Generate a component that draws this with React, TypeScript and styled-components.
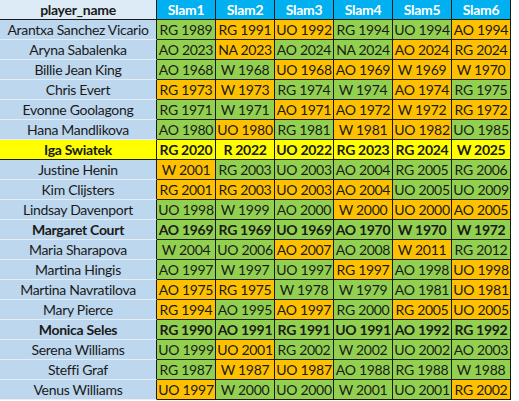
import React from 'react'
import styled, { createGlobalStyle } from 'styled-components'

const GlobalStyle = createGlobalStyle`
  html, body {
    margin: 0;
    padding: 0;
    background: #ffffff;
  }
`

type Tone = 'g' | 'o' | 'y'

interface Player {
  name: string
  bold?: boolean
  highlight?: boolean
  slams: [string, Tone][]
}

const players: Player[] = [
  { name: 'Arantxa Sanchez Vicario', slams: [['RG 1989', 'g'], ['RG 1991', 'o'], ['UO 1992', 'o'], ['RG 1994', 'g'], ['UO 1994', 'g'], ['AO 1994', 'o']] },
  { name: 'Aryna Sabalenka', slams: [['AO 2023', 'g'], ['NA 2023', 'o'], ['AO 2024', 'g'], ['NA 2024', 'g'], ['AO 2024', 'o'], ['RG 2024', 'o']] },
  { name: 'Billie Jean King', slams: [['AO 1968', 'g'], ['W 1968', 'g'], ['UO 1968', 'o'], ['AO 1969', 'o'], ['W 1969', 'o'], ['W 1970', 'o']] },
  { name: 'Chris Evert', slams: [['RG 1973', 'o'], ['W 1973', 'o'], ['RG 1974', 'g'], ['W 1974', 'g'], ['AO 1974', 'o'], ['RG 1975', 'g']] },
  { name: 'Evonne Goolagong', slams: [['RG 1971', 'g'], ['W 1971', 'g'], ['AO 1971', 'o'], ['AO 1972', 'o'], ['W 1972', 'o'], ['RG 1972', 'o']] },
  { name: 'Hana Mandlikova', slams: [['AO 1980', 'g'], ['UO 1980', 'o'], ['RG 1981', 'g'], ['W 1981', 'o'], ['UO 1982', 'o'], ['UO 1985', 'g']] },
  { name: 'Iga Swiatek', bold: true, highlight: true, slams: [['RG 2020', 'y'], ['R 2022', 'y'], ['UO 2022', 'y'], ['RG 2023', 'y'], ['RG 2024', 'y'], ['W 2025', 'y']] },
  { name: 'Justine Henin', slams: [['W 2001', 'o'], ['RG 2003', 'g'], ['UO 2003', 'g'], ['AO 2004', 'g'], ['RG 2005', 'g'], ['RG 2006', 'g']] },
  { name: 'Kim Clijsters', slams: [['RG 2001', 'o'], ['RG 2003', 'o'], ['UO 2003', 'o'], ['AO 2004', 'o'], ['UO 2005', 'g'], ['UO 2009', 'g']] },
  { name: 'Lindsay Davenport', slams: [['UO 1998', 'g'], ['W 1999', 'g'], ['AO 2000', 'g'], ['W 2000', 'o'], ['UO 2000', 'o'], ['AO 2005', 'o']] },
  { name: 'Margaret Court', bold: true, slams: [['AO 1969', 'g'], ['RG 1969', 'g'], ['UO 1969', 'g'], ['AO 1970', 'g'], ['W 1970', 'g'], ['W 1972', 'g']] },
  { name: 'Maria Sharapova', slams: [['W 2004', 'g'], ['UO 2006', 'g'], ['AO 2007', 'o'], ['AO 2008', 'g'], ['W 2011', 'o'], ['RG 2012', 'g']] },
  { name: 'Martina Hingis', slams: [['AO 1997', 'g'], ['W 1997', 'g'], ['UO 1997', 'g'], ['RG 1997', 'o'], ['AO 1998', 'g'], ['UO 1998', 'o']] },
  { name: 'Martina Navratilova', slams: [['AO 1975', 'o'], ['RG 1975', 'o'], ['W 1978', 'g'], ['W 1979', 'g'], ['AO 1981', 'g'], ['UO 1981', 'o']] },
  { name: 'Mary Pierce', slams: [['RG 1994', 'o'], ['AO 1995', 'g'], ['AO 1997', 'o'], ['RG 2000', 'g'], ['RG 2005', 'o'], ['UO 2005', 'o']] },
  { name: 'Monica Seles', bold: true, slams: [['RG 1990', 'g'], ['AO 1991', 'g'], ['RG 1991', 'g'], ['UO 1991', 'g'], ['AO 1992', 'g'], ['RG 1992', 'g']] },
  { name: 'Serena Williams', slams: [['UO 1999', 'g'], ['UO 2001', 'o'], ['RG 2002', 'g'], ['W 2002', 'g'], ['UO 2002', 'g'], ['AO 2003', 'g']] },
  { name: 'Steffi Graf', slams: [['RG 1987', 'g'], ['W 1987', 'o'], ['UO 1987', 'o'], ['AO 1988', 'g'], ['RG 1988', 'g'], ['W 1988', 'g']] },
  { name: 'Venus Williams', slams: [['UO 1997', 'o'], ['W 2000', 'g'], ['UO 2000', 'g'], ['W 2001', 'g'], ['UO 2001', 'g'], ['RG 2002', 'o']] },
]

const toneColors: Record<Tone, string> = {
  g: '#92d050',
  o: '#ffc000',
  y: '#ffff00',
}

const Sheet = styled.div`
  display: grid;
  grid-template-columns: 157px repeat(6, 59px);
  width: 519px;
  font-family: Lato, 'Liberation Sans', sans-serif;
  font-size: 14px;
  letter-spacing: -0.3px;
  color: #1a1a1a;
`

const Cell = styled.div<{ $bold?: boolean }>`
  height: 19px;
  display: flex;
  align-items: center;
  justify-content: center;
  white-space: nowrap;
  overflow: hidden;
  font-weight: ${(p) => (p.$bold ? 700 : 400)};
  line-height: 19px;
`

const NameHeader = styled(Cell)`
  background: #ddebf7;
  border-bottom: 1px solid #1a1a1a;
  border-right: 1px solid #1a1a1a;
  font-weight: 700;
`

const SlamHeader = styled(Cell)`
  background: #00b0f0;
  color: #ffffff;
  font-weight: 700;
  border-bottom: 1px solid #1a1a1a;
  border-right: 1px solid #1a1a1a;
`

const NameCell = styled(Cell)<{ $highlight?: boolean }>`
  background: ${(p) => (p.$highlight ? '#ffff00' : '#bdd7ee')};
  border-bottom: 1px solid ${(p) => (p.$highlight ? '#1a1a1a' : '#e6eff8')};
  border-right: 1px solid #1a1a1a;
`

const SlamCell = styled(Cell)<{ $tone: Tone }>`
  background: ${(p) => toneColors[p.$tone]};
  border-bottom: 1px solid #1a1a1a;
  border-right: 1px solid #1a1a1a;
`

export default function App() {
  return (
    <>
      <GlobalStyle />
      <Sheet>
        <NameHeader>player_name</NameHeader>
        {[1, 2, 3, 4, 5, 6].map((n) => (
          <SlamHeader key={n}>Slam{n}</SlamHeader>
        ))}
        {players.map((p) => (
          <React.Fragment key={p.name}>
            <NameCell $bold={p.bold} $highlight={p.highlight}>
              {p.name}
            </NameCell>
            {p.slams.map(([label, tone], i) => (
              <SlamCell key={i} $tone={tone} $bold={p.bold}>
                {label}
              </SlamCell>
            ))}
          </React.Fragment>
        ))}
      </Sheet>
    </>
  )
}
